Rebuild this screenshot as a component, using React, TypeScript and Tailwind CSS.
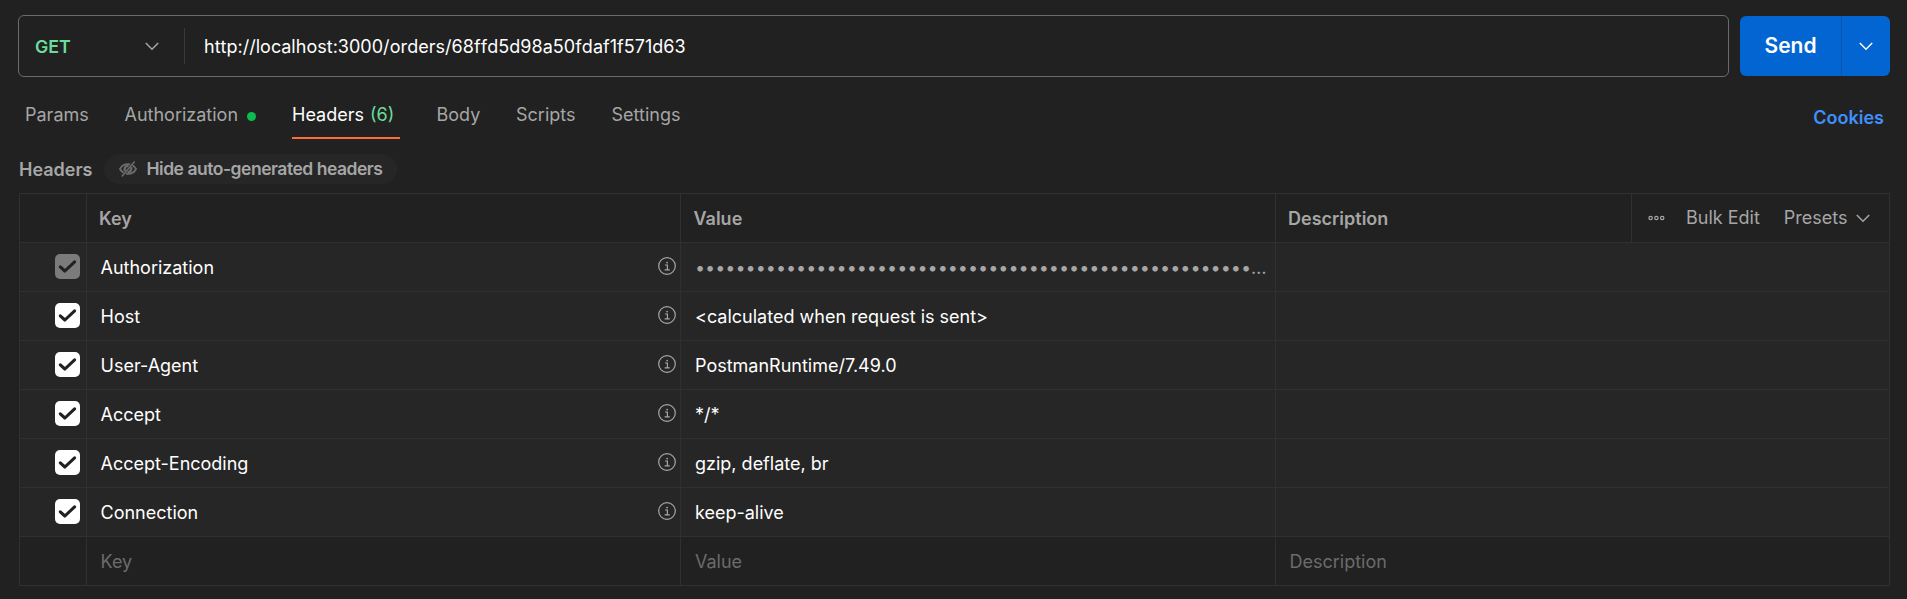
import React from "react";

type Row = { key: string; value: string; locked?: boolean };

const rows: Row[] = [
  { key: "Authorization", value: "•".repeat(55) + "…", locked: true },
  { key: "Host", value: "<calculated when request is sent>" },
  { key: "User-Agent", value: "PostmanRuntime/7.49.0" },
  { key: "Accept", value: "*/*" },
  { key: "Accept-Encoding", value: "gzip, deflate, br" },
  { key: "Connection", value: "keep-alive" },
];

const COLS = "grid grid-cols-[67px_594px_595px_1fr]";

function Chevron({ className }: { className?: string }) {
  return (
    <svg width="14" height="9" viewBox="0 0 14 9" fill="none" stroke="currentColor" strokeWidth="1.5" className={className}>
      <path d="M0.8 1 L7 7.2 L13.2 1" />
    </svg>
  );
}

function EyeOff() {
  return (
    <svg width="18" height="16" viewBox="0 0 18 16" fill="none" stroke="currentColor" strokeWidth="1.8">
      <path d="M7 12.6 C7.6 12.8 8.3 12.9 9 12.9 C13 12.9 16 10 17 8 C16.5 7 15.3 5.4 13.4 4.3" />
      <path d="M4.6 11.7 C2.8 10.6 1.5 9 1 8 C2 6 5 3.1 9 3.1 C9.9 3.1 10.6 3.2 11.2 3.4" />
      <path d="M6 10 C4.8 7.4 6.5 4.6 9.6 4.8" strokeWidth="2.4" />
      <path d="M12.1 6.2 C13 9 11.2 11.4 8.4 11.2" strokeWidth="2.4" />
      <path d="M2.8 15.4 L15.6 0.6" strokeWidth="1.6" />
    </svg>
  );
}

function Info() {
  return (
    <svg width="18" height="18" viewBox="0 0 18 18" fill="none" stroke="currentColor" strokeWidth="1.2">
      <circle cx="9" cy="9" r="8.3" />
      <path d="M7 8 H9.4 V12.9 M6.6 12.9 H11.8" />
      <circle cx="9.1" cy="5.6" r="0.9" fill="currentColor" stroke="none" />
    </svg>
  );
}

function Check({ locked }: { locked?: boolean }) {
  return (
    <span className={`flex size-[25px] items-center justify-center rounded-[5px] ${locked ? "bg-[#7b7b7b]" : "bg-white"}`}>
      <svg width="19" height="15" viewBox="0 0 19 15" fill="none" stroke="#212121" strokeWidth="3.1" strokeLinecap="round" strokeLinejoin="round">
        <path d="M2.3 7.8 L6.9 12 L16.6 2.8" />
      </svg>
    </span>
  );
}

export default function App() {
  return (
    <div className="h-[599px] w-[1907px] overflow-hidden bg-[#212121] pt-[15px] font-['Inter',sans-serif] text-[18px] leading-[24px] text-white">
      <div className="flex pl-[18px]">
        <div className="flex h-[62px] w-[1711px] items-center rounded-[6px] border border-[#6b6b6b]">
          <div className="flex h-9 w-[166px] items-center justify-between border-r border-[#3a3a3a] pr-[25px] pl-4">
            <span className="pt-[2px] text-[17.8px] font-semibold text-[#6bdd9a]">GET</span>
            <Chevron className="text-[#a6a6a6]" />
          </div>
          <span className="pt-[2px] pl-[19px] tracking-[0.02px] [font-kerning:none]">
            http://localhost:3000/orders/68ffd5d98a50fdaf1f571d63
          </span>
        </div>
        <div className="mt-px ml-[11px] flex h-[60px] w-[150px] overflow-hidden rounded-[6px] bg-[#0265d2]">
          <div className="flex w-[102px] items-center justify-center border-r border-[#0855aa] text-[21px] font-semibold">Send</div>
          <div className="flex flex-1 items-center justify-center">
            <Chevron />
          </div>
        </div>
      </div>

      <div className="flex h-[62px] items-start justify-between pr-[23px] pl-[25px] text-[#a6a6a6]">
        <div className="flex items-start pt-[26px]">
          <span className="w-[99.5px]">Params</span>
          <span className="flex w-[167.5px] items-center gap-[8.5px]">
            Authorization
            <span className="mt-[2px] size-[9px] rounded-full bg-[#0cbb52]" />
          </span>
          <span className="mr-[36.5px] flex h-[36px] w-[108px] gap-[6px] border-b-2 border-[#ff6c37] text-white">
            Headers <span className="text-[#6bdd9a]">(6)</span>
          </span>
          <span className="w-[79.5px]">Body</span>
          <span className="w-[95.5px]">Scripts</span>
          <span>Settings</span>
        </div>
        <span className="pt-[29px] font-semibold text-[#4090f9]">Cookies</span>
      </div>

      <div className="mt-[15px] flex h-[30px] items-center pl-[19px] font-semibold text-[#a6a6a6]">
        <span className="w-[85px] pt-px">Headers</span>
        <span className="flex h-[30px] w-[293px] items-center gap-[9.5px] rounded-full bg-[#262626] pl-[15px] text-[17.5px] tracking-[-0.48px] whitespace-nowrap">
          <span className="text-[#6b6b6b]">
            <EyeOff />
          </span>
          Hide auto-generated headers
        </span>
      </div>

      <div className="mt-[9px] ml-[19px] w-[1871px] border-t border-r border-[#303030]">
        <div className={`${COLS} h-[49px] border-b border-[#303030] font-semibold text-[#a6a6a6]`}>
          <div className="border-l border-[#303030]" />
          <div className="flex items-center border-l border-[#303030] pt-[2px] pl-3">Key</div>
          <div className="flex items-center border-l border-[#303030] pt-[2px] pl-[12.5px]">Value</div>
          <div className="flex border-l border-[#303030]">
            <span className="flex w-[355px] items-center pt-[2px] pl-3">Description</span>
            <div className="flex flex-1 items-center border-l border-[#303030] pl-4 font-normal">
              <svg width="17" height="6" viewBox="0 0 17 6" fill="none" stroke="currentColor" strokeWidth="1.2">
                <circle cx="2.6" cy="3" r="1.7" />
                <circle cx="8.4" cy="3" r="1.7" />
                <circle cx="14.2" cy="3" r="1.7" />
              </svg>
              <span className="ml-[21px]">Bulk Edit</span>
              <span className="ml-6">Presets</span>
              <Chevron className="ml-2" />
            </div>
          </div>
        </div>
        {rows.map((r) => (
          <div key={r.key} className={`${COLS} h-[49px] border-b border-[#303030] bg-[#262626]`}>
            <div className="flex items-center border-l border-[#303030] pb-px pl-[34.5px]">
              <Check locked={r.locked} />
            </div>
            <div className="flex items-center justify-between border-l border-[#303030] pr-1 pl-[13.5px]">
              <span className="pt-[2px]">{r.key}</span>
              <span className="pb-[2px] text-[#a6a6a6]">
                <Info />
              </span>
            </div>
            <div className="flex items-center border-l border-[#303030] pt-[2px] pl-[14px] whitespace-nowrap">
              <span className={r.locked ? "tracking-[-0.015px] text-[#a6a6a6]" : ""}>{r.value}</span>
            </div>
            <div className="border-l border-[#303030]" />
          </div>
        ))}
        <div className={`${COLS} h-[49px] border-b border-[#303030] text-[#6b6b6b]`}>
          <div className="border-l border-[#303030]" />
          <div className="flex items-center border-l border-[#303030] pt-[2px] pl-[13.5px]">Key</div>
          <div className="flex items-center border-l border-[#303030] pt-[2px] pl-[14px]">Value</div>
          <div className="flex items-center border-l border-[#303030] pt-[2px] pl-[13.5px]">Description</div>
        </div>
      </div>
    </div>
  );
}
